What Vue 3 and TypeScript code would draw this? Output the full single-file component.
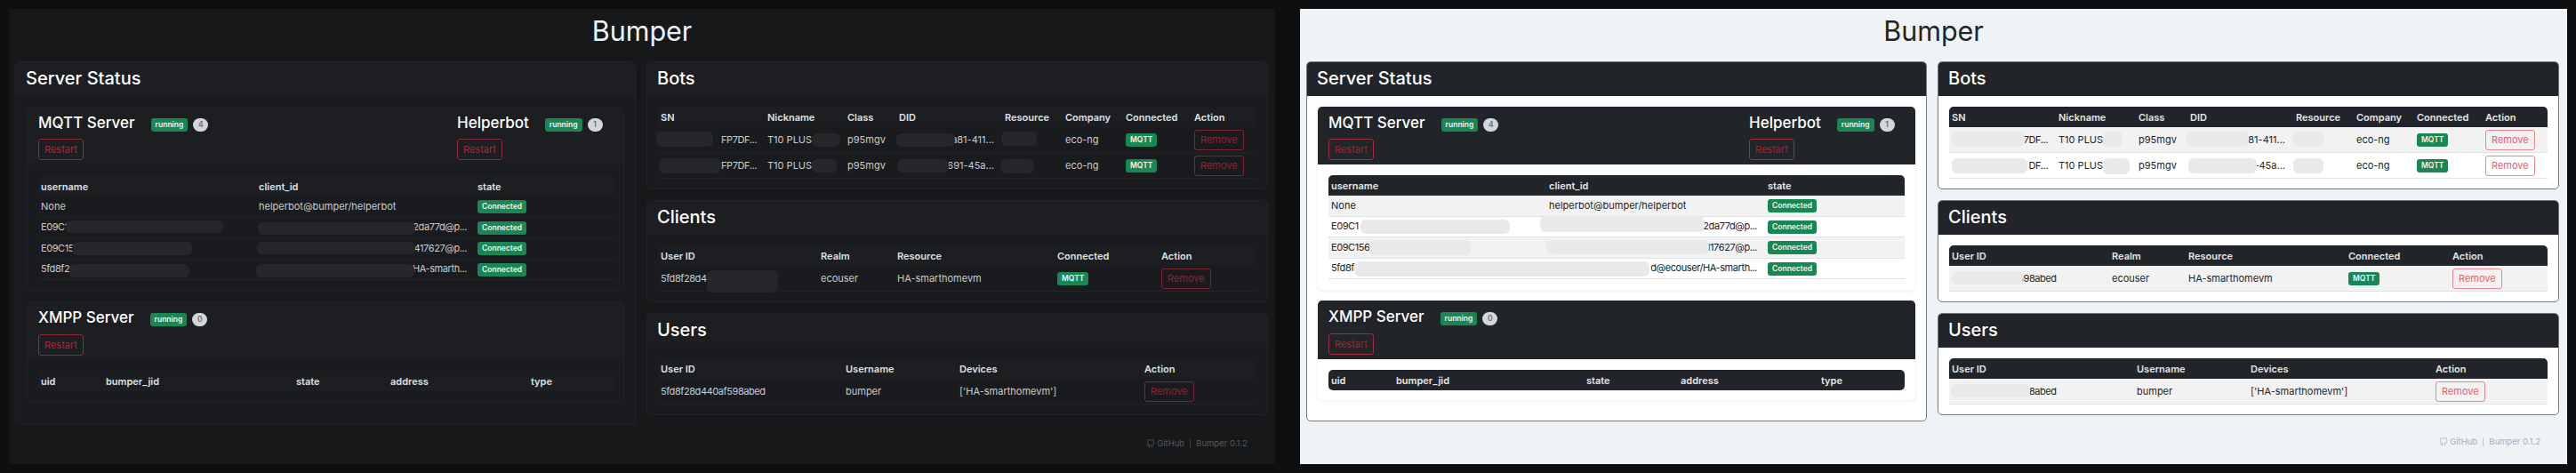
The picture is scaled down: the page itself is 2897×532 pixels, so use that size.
<script setup lang="ts">
type Cell = { t?: string; lt?: string; badge?: string; btn?: string };
interface Tbl { widths: number[]; head: string[]; rows: Cell[][] }

const badge = (b: string): Cell => ({ badge: b });
const remove: Cell = { btn: 'Remove' };

const mqtt: Tbl = {
  widths: [245, 246, 157],
  head: ['username', 'client_id', 'state'],
  rows: [
    [{ t: 'None' }, { t: 'helperbot@bumper/helperbot' }, badge('Connected')],
    [{ t: 'E09C1' }, { t: '2da77d@p...', lt: 'd2da77d@p...' }, badge('Connected')],
    [{ t: 'E09C15', lt: 'E09C156' }, { t: '417627@p...', lt: '117627@p...' }, badge('Connected')],
    [{ t: '5fd8f2', lt: '5fd8f' }, { t: 'HA-smarth...', lt: 'd@ecouser/HA-smarth...' }, badge('Connected')],
  ],
};
const xmpp: Tbl = {
  widths: [73, 214, 106, 158, 97],
  head: ['uid', 'bumper_jid', 'state', 'address', 'type'],
  rows: [],
};
const bots: Tbl = {
  widths: [120, 90, 58, 119, 68, 68, 77, 73],
  head: ['SN', 'Nickname', 'Class', 'DID', 'Resource', 'Company', 'Connected', 'Action'],
  rows: [
    [{ t: 'FP7DF...', lt: '7DF...' }, { t: 'T10 PLUS' }, { t: 'p95mgv' }, { t: 'a81-411...', lt: '81-411...' }, { t: '' }, { t: 'eco-ng' }, badge('MQTT'), remove],
    [{ t: 'FP7DF...', lt: 'DF...' }, { t: 'T10 PLUS' }, { t: 'p95mgv' }, { t: '691-45a...', lt: '-45a...' }, { t: '' }, { t: 'eco-ng' }, badge('MQTT'), remove],
  ],
};
const clients: Tbl = {
  widths: [180, 86, 180, 117, 110],
  head: ['User ID', 'Realm', 'Resource', 'Connected', 'Action'],
  rows: [[{ t: '5fd8f28d440af598abed' }, { t: 'ecouser' }, { t: 'HA-smarthomevm' }, badge('MQTT'), remove]],
};
const users: Tbl = {
  widths: [208, 128, 208, 129],
  head: ['User ID', 'Username', 'Devices', 'Action'],
  rows: [[{ t: '5fd8f28d440af598abed' }, { t: 'bumper' }, { t: "['HA-smarthomevm']" }, remove]],
};

const themes = ['dark', 'light'];
const label = (theme: string, c: Cell) => (theme === 'light' && c.lt ? c.lt : c.t);

const blobsDark: number[][] = [
  [74, 248, 177, 14], [290, 250, 177, 14], [81, 272, 135, 15], [289, 272, 178, 14], [78, 297, 135, 15], [288, 297, 178, 15],
  [738, 148, 64, 17], [913, 150, 32, 15], [1008, 150, 66, 15], [1126, 148, 40, 16],
  [741, 178, 70, 17], [913, 179, 28, 15], [1009, 179, 58, 15], [1125, 179, 38, 16],
  [795, 304, 80, 25],
];
const blobsLight: number[][] = [
  [1530, 247, 168, 16], [1732, 243, 185, 18], [1540, 270, 114, 17], [1739, 270, 183, 16], [1523, 294, 332, 17],
  [2195, 148, 82, 17], [2365, 148, 22, 17], [2459, 148, 70, 17], [2578, 148, 35, 17],
  [2195, 178, 85, 17], [2365, 178, 30, 18], [2461, 178, 77, 17], [2579, 178, 34, 17],
  [2195, 305, 80, 15], [2194, 432, 89, 15],
];
</script>

<template>
  <div class="page">
    <section v-for="th in themes" :key="th" class="panel" :class="th">
      <h1 class="title">Bumper</h1>
      <div class="columns">
        <div class="col">
          <article class="card status">
            <h2 class="card-head">Server Status</h2>
            <div class="card-body stack">
              <article class="card inner mq">
                <header class="inner-head">
                  <div class="svc">
                    <div class="svc-title"><h3>MQTT Server</h3><span class="badge">running</span><span class="count">4</span></div>
                    <button class="btn">Restart</button>
                  </div>
                  <div class="svc right">
                    <div class="svc-title"><h3>Helperbot</h3><span class="badge">running</span><span class="count">1</span></div>
                    <button class="btn">Restart</button>
                  </div>
                </header>
                <div class="inner-body">
                  <table class="tbl">
                    <colgroup><col v-for="(w, i) in mqtt.widths" :key="i" :style="{ width: w + 'px' }" /></colgroup>
                    <thead><tr><th v-for="h in mqtt.head" :key="h">{{ h }}</th></tr></thead>
                    <tbody>
                      <tr v-for="(r, i) in mqtt.rows" :key="i">
                        <td v-for="(c, j) in r" :key="j">
                          <span v-if="c.badge" class="badge">{{ c.badge }}</span>
                          <span v-else class="end" :class="{ pushed: j === 1 && i > 0, tight: i > 0 }">{{ label(th, c) }}</span>
                        </td>
                      </tr>
                    </tbody>
                  </table>
                </div>
              </article>
              <article class="card inner xm">
                <header class="inner-head">
                  <div class="svc">
                    <div class="svc-title"><h3>XMPP Server</h3><span class="badge">running</span><span class="count">0</span></div>
                    <button class="btn">Restart</button>
                  </div>
                </header>
                <div class="inner-body">
                  <table class="tbl empty">
                    <colgroup><col v-for="(w, i) in xmpp.widths" :key="i" :style="{ width: w + 'px' }" /></colgroup>
                    <thead><tr><th v-for="h in xmpp.head" :key="h">{{ h }}</th></tr></thead>
                  </table>
                </div>
              </article>
            </div>
          </article>
        </div>
        <div class="col">
          <article v-for="s in [{ n: 'Bots', t: bots }, { n: 'Clients', t: clients }, { n: 'Users', t: users }]" :key="s.n" class="card">
            <h2 class="card-head">{{ s.n }}</h2>
            <div class="card-body">
              <table class="tbl tall">
                <colgroup><col v-for="(w, i) in s.t.widths" :key="i" :style="{ width: w + 'px' }" /></colgroup>
                <thead><tr><th v-for="h in s.t.head" :key="h">{{ h }}</th></tr></thead>
                <tbody>
                  <tr v-for="(r, i) in s.t.rows" :key="i">
                    <td v-for="(c, j) in r" :key="j">
                      <span v-if="c.badge" class="badge">{{ c.badge }}</span>
                      <button v-else-if="c.btn" class="btn">{{ c.btn }}</button>
                      <span v-else class="end" :class="{ pushed: s.n === 'Bots' && (j === 0 || j === 3), tight: j === 0 }">{{ label(th, c) }}</span>
                    </td>
                  </tr>
                </tbody>
              </table>
            </div>
          </article>
          <footer class="foot">
            <svg class="gh" viewBox="0 0 24 24" width="10" height="10" fill="none" stroke="currentColor" stroke-width="2" stroke-linecap="round" stroke-linejoin="round" aria-hidden="true"><path d="M9 19c-5 1.5-5-2.5-7-3m14 6v-3.87a3.37 3.37 0 0 0-.94-2.61c3.14-.35 6.44-1.54 6.44-7A5.44 5.44 0 0 0 20 4.77 5.07 5.07 0 0 0 19.91 1S18.73.65 16 2.48a13.38 13.38 0 0 0-7 0C6.27.65 5.09 1 5.09 1A5.07 5.07 0 0 0 5 4.77a5.44 5.44 0 0 0-1.5 3.75c0 5.42 3.3 6.61 6.44 7A3.37 3.37 0 0 0 9 18.13V22"/></svg>
            <span>GitHub</span><span class="sep"></span><span>Bumper 0.1.2</span>
          </footer>
        </div>
      </div>
    </section>
    <i v-for="(b, i) in blobsDark" :key="'d' + i" class="blob blob-d" :style="{ left: b[0] + 'px', top: b[1] + 'px', width: b[2] + 'px', height: b[3] + 'px' }"></i>
    <i v-for="(b, i) in blobsLight" :key="'l' + i" class="blob blob-l" :style="{ left: b[0] + 'px', top: b[1] + 'px', width: b[2] + 'px', height: b[3] + 'px' }"></i>
  </div>
</template>

<style>
html, body { margin: 0; background: #0e0f10; }
</style>

<style scoped>
.page {
  position: relative;
  width: 2897px;
  height: 532px;
  box-sizing: border-box;
  padding: 10px;
  display: flex;
  gap: 28px;
  background: #0e0f10;
  font-family: Inter, "Liberation Sans", sans-serif;
  overflow: hidden;
}
.panel {
  width: 1424px;
  height: 512px;
  box-sizing: border-box;
  padding: 0 7px;
  flex: none;
  background: var(--bg);
  color: var(--text);
}
.panel.dark {
  --bg: #16181a; --text: #c9cbcd; --card: #191b1e; --head: #1c1e22; --bd: #212327;
  --thead: #1c1e22; --thtext: #dfe1e3; --odd: #191b1e; --even: #191b1e; --row: #222428;
  --btn: #8b2635; --btnbd: #7b2733; --rbtn: #a8293b; --rbtnbd: #8a2a38; --foot: #55585c;
  --title: #f2f3f4; --count: #d3d6da;
}
.panel.light {
  --bg: #f0f3f6; --text: #212529; --card: #fff; --head: #212529; --bd: #74797e;
  --thead: #212529; --thtext: #e4e6e8; --odd: #f2f2f2; --even: #fff; --row: #dee2e6;
  --btn: #e4606d; --btnbd: #ea868f; --rbtn: #9c2635; --rbtnbd: #a52a3a; --foot: #a7adb4;
  --title: #212529; --count: #d3d6da;
  width: 1425px;
}
.title {
  margin: 0;
  height: 59px;
  line-height: 50px;
  text-align: center;
  font-size: 30.5px;
  font-weight: 400;
  color: var(--title);
}
.columns { display: grid; grid-template-columns: 698px 699px; column-gap: 12px; align-items: start; }
.col { display: flex; flex-direction: column; gap: 12px; }
.card {
  background: var(--card);
  border: 1px solid var(--bd);
  border-radius: 5px;
  box-sizing: border-box;
  overflow: hidden;
}
.card-head {
  margin: 0;
  height: 37.5px;
  box-sizing: border-box;
  padding: 0 11px;
  line-height: 36px;
  font-size: 20px;
  font-weight: 500;
  color: #fff;
  background: var(--head);
}
.card-body { padding: 12.5px 12px 11px; }
.light .card-head { height: 38px; }
.light .card-body { padding-top: 12px; }
.stack { display: flex; flex-direction: column; gap: 12px; padding-bottom: 25px; }
.light .stack { padding-bottom: 23px; }
.light .inner { border: 0; box-shadow: 0 1px 4px rgba(0, 0, 0, .08); }
.inner-head {
  display: flex;
  height: 64px;
  box-sizing: border-box;
  padding: 7px 12px 0;
  background: var(--head);
  justify-content: space-between;
}
.light .mq .inner-head { height: 65px; padding-top: 8px; }
.xm .inner-head { height: 65px; }
.light .xm .inner-head { height: 66px; padding-top: 8px; }
.svc { display: flex; flex-direction: column; align-items: flex-start; gap: 4px; }
.xm .svc { gap: 5px; }
.svc.right { width: 175px; }
.svc-title { display: flex; align-items: center; height: 24px; }
h3 {
  margin: 0 18px 5px 0;
  font-size: 17px;
  font-weight: 500;
  color: #fff;
  line-height: 20px;
}
.inner-body { padding: 13px 12px 11px; }
.xm .inner-body { padding-top: 12px; }
.light .inner-body { padding: 12px; }
.light .xm .inner-body { padding-bottom: 11px; }
.tbl { border-collapse: separate; border-spacing: 0; table-layout: fixed; width: 100%; font-size: 11px; }
.tbl th {
  height: 23px;
  padding: 0 3px;
  text-align: left;
  font-weight: 600;
  color: var(--thtext);
  background: var(--thead);
}
.tbl th:first-child { border-top-left-radius: 5px; }
.tbl th:last-child { border-top-right-radius: 5px; }
.empty th:first-child { border-bottom-left-radius: 5px; }
.empty th:last-child { border-bottom-right-radius: 5px; }
.tbl td {
  padding: 0 3px;
  height: 22.5px;
  border-bottom: 1px solid var(--row);
  white-space: nowrap;
  overflow: hidden;
  line-height: 15px;
}
.tbl tbody tr:nth-child(odd) td { background: var(--odd); }
.tbl tbody tr:nth-child(even) td { background: var(--even); }
.tall td { height: 28px; }
.pushed { display: block; text-align: right; padding-right: 6px; }
.tight { letter-spacing: -.42px; }
.badge {
  display: inline-flex;
  align-items: center;
  height: 15px;
  padding: 0 5px;
  border-radius: 3px;
  background: #198754;
  color: #f1f3f4;
  font-size: 8.5px;
  font-weight: 600;
  box-sizing: border-box;
  vertical-align: middle;
}
.count {
  display: inline-flex;
  align-items: center;
  justify-content: center;
  width: 17px;
  height: 15px;
  margin-left: 6px;
  border-radius: 8px;
  background: var(--count);
  color: #6c7075;
  font-size: 8.5px;
  font-weight: 600;
}
.btn {
  height: 23px;
  padding: 0 6px;
  box-sizing: border-box;
  border: 1px solid var(--btnbd);
  border-radius: 3px;
  background: transparent;
  color: var(--btn);
  font: 400 11px Inter, "Liberation Sans", sans-serif;
  vertical-align: middle;
}
.svc .btn { height: 24px; color: var(--rbtn); border-color: var(--rbtnbd); }
.foot {
  display: flex;
  align-items: center;
  justify-content: flex-end;
  gap: 2px;
  height: 12px;
  line-height: 12px;
  padding: 14px 23px 0 11px;
  font-size: 9.5px;
  color: var(--foot);
}
.light .foot { padding: 12px 21px 0 11px; }
.sep { width: 1px; height: 10px; margin: 0 4px; background: currentColor; opacity: .6; }
.blob { position: absolute; border-radius: 6px; }
.blob-d { background: #26272a; }
.blob-l { background: #e9e9e9; }
</style>
